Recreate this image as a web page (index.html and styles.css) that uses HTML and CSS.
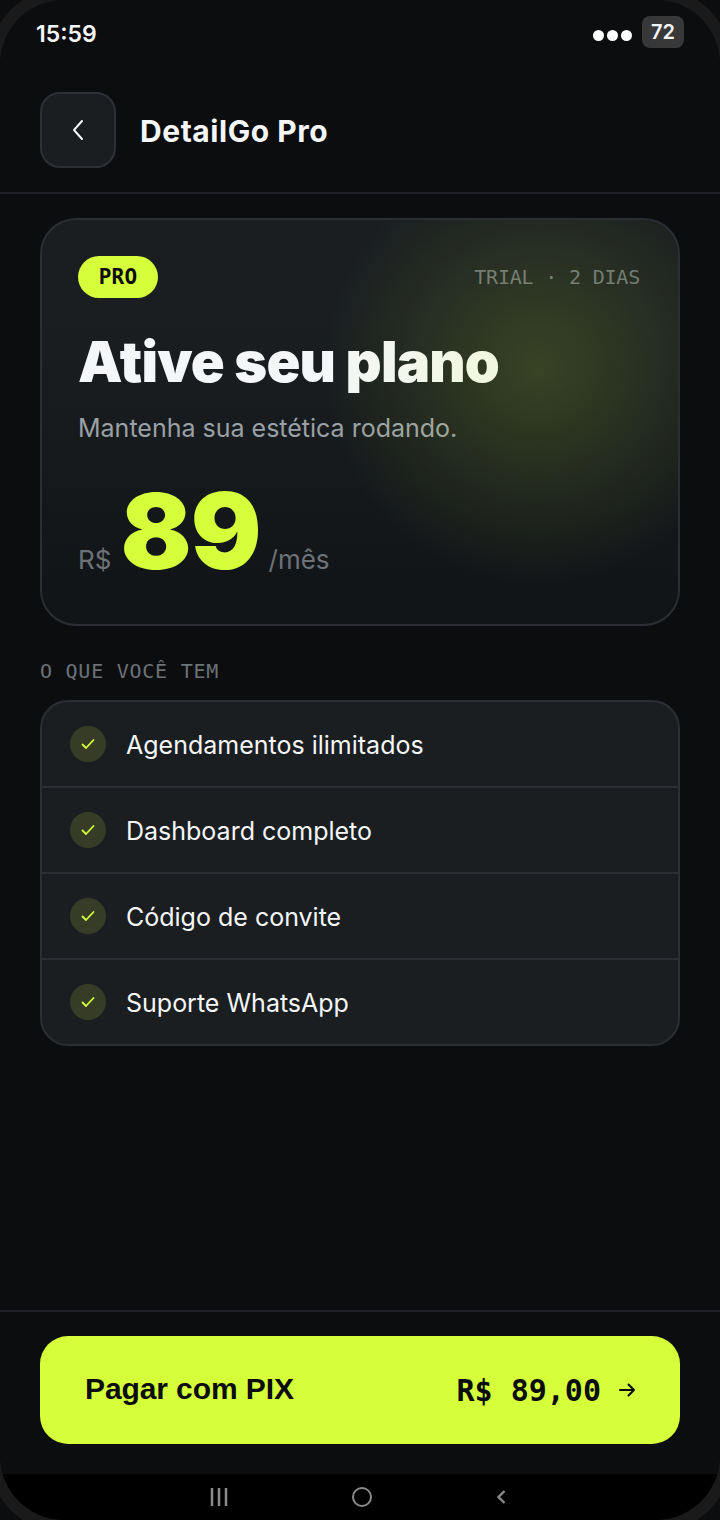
FILE: index.html
```html
<!DOCTYPE html>
<html lang="pt-BR">
<head>
    <meta charset="UTF-8">
    <meta name="viewport" content="width=device-width, initial-scale=1.0">
    <title>DetailGo Pro</title>
    <link rel="stylesheet" href="styles.css">
</head>
<body>
    <div class="phone">
        <div class="screen">
            <div class="status-bar">
                <span class="clock">15:59</span>
                <div class="status-right">
                    <span class="dots"><i></i><i></i><i></i></span>
                    <span class="battery">72</span>
                </div>
            </div>

            <header class="top-bar">
                <button class="back-btn" aria-label="Voltar">
                    <svg width="14" height="22" viewBox="0 0 14 22" fill="none" stroke="#f5f6f8" stroke-width="2" stroke-linecap="round" stroke-linejoin="round"><path d="M11 2 3 11l8 9"/></svg>
                </button>
                <h1>DetailGo Pro</h1>
            </header>

            <main class="content">
                <section class="plan-card">
                    <div class="plan-top">
                        <span class="badge">PRO</span>
                        <span class="trial">TRIAL · 2 DIAS</span>
                    </div>
                    <h2>Ative seu plano</h2>
                    <p class="plan-sub">Mantenha sua estética rodando.</p>
                    <div class="price">
                        <span class="currency">R$</span>
                        <span class="amount">89</span>
                        <span class="period">/mês</span>
                    </div>
                </section>

                <p class="section-label">O QUE VOCÊ TEM</p>

                <ul class="features">
                    <li>
                        <span class="check"><svg width="14" height="12" viewBox="0 0 14 12" fill="none" stroke="#d4ff3a" stroke-width="1.8" stroke-linecap="round" stroke-linejoin="round"><path d="M1.5 6.5 5 10l7.5-8"/></svg></span>
                        <span class="feature-name">Agendamentos ilimitados</span>
                    </li>
                    <li>
                        <span class="check"><svg width="14" height="12" viewBox="0 0 14 12" fill="none" stroke="#d4ff3a" stroke-width="1.8" stroke-linecap="round" stroke-linejoin="round"><path d="M1.5 6.5 5 10l7.5-8"/></svg></span>
                        <span class="feature-name">Dashboard completo</span>
                    </li>
                    <li>
                        <span class="check"><svg width="14" height="12" viewBox="0 0 14 12" fill="none" stroke="#d4ff3a" stroke-width="1.8" stroke-linecap="round" stroke-linejoin="round"><path d="M1.5 6.5 5 10l7.5-8"/></svg></span>
                        <span class="feature-name">Código de convite</span>
                    </li>
                    <li>
                        <span class="check"><svg width="14" height="12" viewBox="0 0 14 12" fill="none" stroke="#d4ff3a" stroke-width="1.8" stroke-linecap="round" stroke-linejoin="round"><path d="M1.5 6.5 5 10l7.5-8"/></svg></span>
                        <span class="feature-name">Suporte WhatsApp</span>
                    </li>
                </ul>
            </main>

            <footer class="pay-bar">
                <button class="pay-btn">
                    <span class="pay-label">Pagar com PIX</span>
                    <span class="pay-amount">R$ 89,00
                        <svg width="18" height="14" viewBox="0 0 18 14" fill="none" stroke="#0b0c0e" stroke-width="2" stroke-linecap="round" stroke-linejoin="round"><path d="M2 7h14M10.500 1.500 16 7l-5.500 5.500"/></svg>
                    </span>
                </button>
            </footer>

            <nav class="nav-bar">
                <svg width="20" height="20" viewBox="0 0 20 20" fill="none" stroke="#8a8a8a" stroke-width="2.500"><path d="M3 1v18M10 1v18M17 1v18"/></svg>
                <svg width="22" height="22" viewBox="0 0 22 22" fill="none" stroke="#8a8a8a" stroke-width="2"><circle cx="11" cy="11" r="9"/></svg>
                <svg width="12" height="16" viewBox="0 0 12 16" fill="none" stroke="#8a8a8a" stroke-width="2.400"><path d="M9.500 2 3.500 8l6 6"/></svg>
            </nav>
        </div>
    </div>
</body>
</html>
```
FILE: styles.css
```css
* {
    box-sizing: border-box;
}

body {
    margin: 0;
    background-color: #0c0d0f;
    font-family: Inter, "Liberation Sans", sans-serif;
    color: #f5f6f8;
}

button {
    border: none;
    padding: 0;
    font: inherit;
    cursor: pointer;
}

.phone {
    width: 720px;
    height: 1520px;
    position: relative;
    overflow: hidden;
    background-color: #0c0d0f;
}

/* device ring, only its corners fall inside the window */
.phone::after {
    content: "";
    position: absolute;
    inset: 0;
    border-radius: 64px;
    box-shadow: 0 0 0 12px #1a1a1a;
    pointer-events: none;
}

.screen {
    height: 100%;
    display: flex;
    flex-direction: column;
    background-color: #0c0d0f;
    border-radius: 64px;
    overflow: hidden;
}

.status-bar {
    height: 68px;
    padding: 0 36px;
    display: flex;
    justify-content: space-between;
    align-items: center;
}

.clock {
    font-size: 23px;
    font-weight: 600;
}

.status-right {
    display: flex;
    align-items: center;
    gap: 10px;
}

.dots {
    display: flex;
    gap: 3px;
    margin-top: 2px;
}

.dots i {
    width: 11px;
    height: 11px;
    border-radius: 50%;
    background-color: #fff;
}

.battery {
    width: 42px;
    height: 32px;
    margin-top: -4px;
    border-radius: 8px;
    background-color: #383838;
    font-size: 20px;
    font-weight: 600;
    line-height: 32px;
    text-align: center;
}

.top-bar {
    height: 126px;
    padding: 0 40px;
    display: flex;
    align-items: center;
    gap: 24px;
    border-bottom: 2px solid #1e2125;
}

.back-btn {
    width: 76px;
    height: 76px;
    border-radius: 20px;
    border: 2px solid #2d3034;
    background-color: #1a1e21;
    display: flex;
    align-items: center;
    justify-content: center;
}

h1 {
    margin: 2px 0 0;
    font-size: 30px;
    font-weight: 700;
    letter-spacing: 0.55px;
}

.content {
    flex: 1;
    padding: 24px 40px 0;
}

.plan-card {
    position: relative;
    height: 408px;
    padding: 36px 38px 36px 36px;
    border: 2px solid #2b2e32;
    border-radius: 36px;
    background: linear-gradient(180deg, #1a1e21, #1a1e21 25%, #111417);
}

/* lime glow sits over the card text as well */
.plan-card::after {
    content: "";
    position: absolute;
    inset: 0;
    border-radius: 34px;
    background: radial-gradient(circle 215px at 78% 37%, rgba(212, 255, 58, 0.17), rgba(212, 255, 58, 0));
    pointer-events: none;
}

.plan-top {
    display: flex;
    justify-content: space-between;
    align-items: center;
}

.badge {
    width: 80px;
    height: 42px;
    border-radius: 21px;
    background-color: #d4ff3a;
    color: #0b0c0e;
    font-family: "DejaVu Sans Mono", monospace;
    font-size: 21px;
    font-weight: 700;
    letter-spacing: 0.2px;
    line-height: 42px;
    text-align: center;
}

.trial {
    font-family: "DejaVu Sans Mono", monospace;
    font-size: 20px;
    letter-spacing: -0.2px;
    color: #6d7277;
}

h2 {
    margin: 30px 0 0;
    font-size: 56px;
    font-weight: 900;
    line-height: 68px;
    letter-spacing: -0.8px;
}

.plan-sub {
    margin: 16px 0 0;
    font-size: 25px;
    line-height: 32px;
    color: #9aa0a5;
}

.price {
    margin-top: 31px;
    display: flex;
    align-items: baseline;
    gap: 9px;
}

.currency,
.period {
    font-size: 26px;
    color: #6d7277;
}

.period {
    margin-left: -1px;
}

.amount {
    font-size: 105px;
    font-weight: 900;
    line-height: 112px;
    letter-spacing: -1px;
    color: #d4ff3a;
}

.section-label {
    margin: 32px 0 16px;
    font-family: "DejaVu Sans Mono", monospace;
    font-size: 20px;
    line-height: 26px;
    letter-spacing: 0.75px;
    color: #6d7277;
}

.features {
    list-style: none;
    margin: 0;
    padding: 0;
    border: 2px solid #2b2e32;
    border-radius: 28px;
    background-color: #1a1e21;
    overflow: hidden;
}

.features li {
    height: 86px;
    padding: 0 28px;
    display: flex;
    align-items: center;
    gap: 20px;
    font-size: 25px;
    font-weight: 400;
    border-bottom: 2px solid #2b2e32;
}

.features li:last-child {
    height: 84px;
    border-bottom: none;
}

.feature-name {
    margin-top: 2px;
}

.check {
    width: 36px;
    height: 36px;
    border-radius: 50%;
    background-color: #373c26;
    display: flex;
    align-items: center;
    justify-content: center;
}

.pay-bar {
    height: 164px;
    padding: 24px 40px 0;
    border-top: 2px solid #1e2125;
}

.pay-btn {
    width: 100%;
    height: 108px;
    padding: 0 44px 0 45px;
    border-radius: 28px;
    background-color: #d4ff3a;
    color: #0b0c0e;
    display: flex;
    justify-content: space-between;
    align-items: center;
}

.pay-label {
    margin-top: -2px;
    font-family: "Liberation Sans", sans-serif;
    font-size: 30px;
    font-weight: 700;
    letter-spacing: -0.1px;
}

.pay-amount {
    display: flex;
    align-items: center;
    gap: 17px;
    font-family: "DejaVu Sans Mono", monospace;
    font-size: 30px;
    font-weight: 700;
}

.nav-bar {
    height: 46px;
    padding-left: 209px;
    background-color: #000;
    display: flex;
    align-items: center;
    gap: 122px;
}
```
